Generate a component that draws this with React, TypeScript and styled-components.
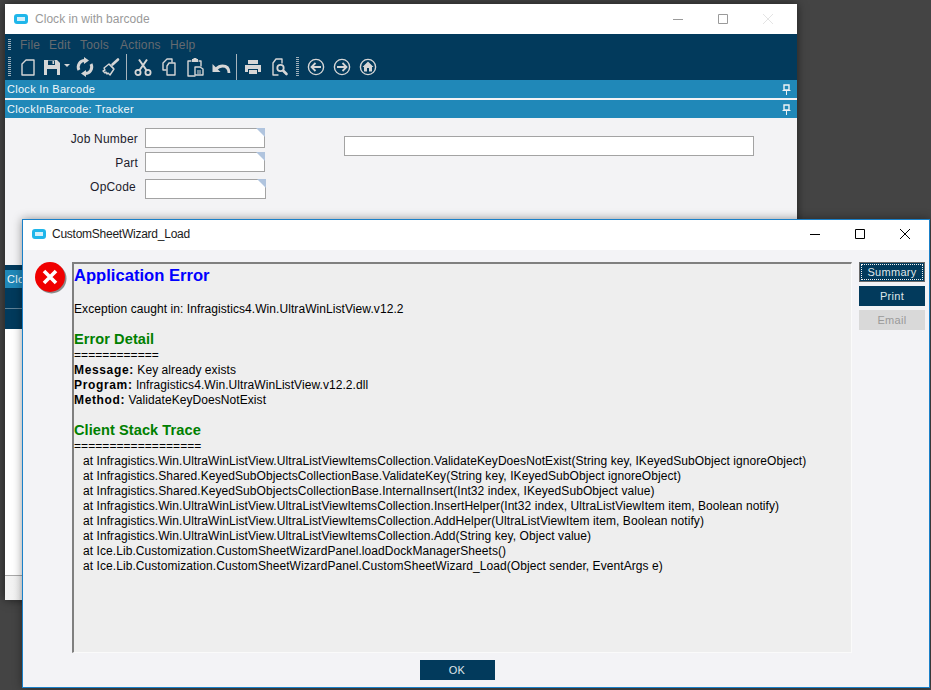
import React from 'react';
import styled, { createGlobalStyle } from 'styled-components';

const GlobalStyle = createGlobalStyle`
  html, body {
    margin: 0;
    padding: 0;
    height: 100%;
    overflow: hidden;
    background: #444444;
    font-family: "Liberation Sans", Arial, sans-serif;
  }
`;

const NAVY = '#023a5c';
const BLUE = '#2088b8';
const ICON = '#d6d6d6';

const Desktop = styled.div`
  position: relative;
  width: 931px;
  height: 690px;
  overflow: hidden;
  background: #444444;
`;

const MainWindow = styled.section`
  position: absolute;
  left: 5px;
  top: 4px;
  width: 792px;
  height: 596px;
  display: flex;
  flex-direction: column;
  background: #f3f3f5;
  box-shadow: 0 0 9px rgba(0, 0, 0, 0.55);
`;

const Dialog = styled.section`
  position: absolute;
  left: 22px;
  top: 219px;
  width: 908px;
  height: 469px;
  box-sizing: border-box;
  display: flex;
  flex-direction: column;
  background: #f3f3f6;
  border: 1px solid #1a80c8;
  box-shadow: 0 0 9px rgba(0, 0, 0, 0.4);
`;

const TitleBar = styled.header<{ $height: number; $lift?: number }>`
  flex: none;
  box-sizing: border-box;
  height: ${p => p.$height}px;
  padding-bottom: ${p => p.$lift ?? 0}px;
  display: flex;
  align-items: center;
  background: #ffffff;
`;

const AppMark = styled.span<{ $left: number }>`
  flex: none;
  box-sizing: border-box;
  width: 14px;
  height: 10px;
  margin: 0 6px 0 ${p => p.$left}px;
  background: #d4f0fb;
  border: 3px solid #1fb6ea;
  border-radius: 3px;
`;

const TitleText = styled.span<{ $active?: boolean }>`
  flex: 1;
  font-size: 12px;
  margin-left: ${p => (p.$active ? 0 : 1)}px;
  letter-spacing: ${p => (p.$active ? '-0.25px' : '0.03px')};
  color: ${p => (p.$active ? '#1a1a1a' : '#9a9a9a')};
`;

const WindowControls = styled.div<{ $right: number }>`
  display: flex;
  gap: 25px;
  margin-right: ${p => p.$right}px;
`;

const ControlGlyph = styled.svg`
  display: block;
  width: 20px;
  height: 12px;
`;

const MenuArea = styled.div`
  flex: none;
  height: 46px;
  background: ${NAVY};
  display: flex;
  flex-direction: column;
`;

const MenuRow = styled.nav`
  height: 20px;
  display: flex;
  align-items: center;
  padding-top: 1px;
  box-sizing: border-box;
`;

const Gripper = styled.span<{ $height: number; $margin: string }>`
  flex: none;
  width: 3px;
  height: ${p => p.$height}px;
  margin: ${p => p.$margin};
  background: repeating-linear-gradient(to bottom, #9fb0bb 0 1px, transparent 1px 2px);
`;

const MenuItem = styled.span<{ $width: number }>`
  width: ${p => p.$width}px;
  font-size: 12px;
  letter-spacing: 0.2px;
  color: #666b70;
`;

const ToolRow = styled.div`
  height: 26px;
  display: flex;
  align-items: center;
`;

const ToolSlot = styled.span<{ $width?: number }>`
  flex: none;
  width: ${p => p.$width ?? 26}px;
  height: 26px;
  display: flex;
  align-items: center;
  justify-content: center;
`;

const ToolGlyph = styled.svg`
  display: block;
  width: 20px;
  height: 20px;
`;

const DropCaret = styled.span`
  flex: none;
  width: 0;
  height: 0;
  margin: 0 3px 4px 2px;
  border-left: 3px solid transparent;
  border-right: 3px solid transparent;
  border-top: 3px solid ${ICON};
`;

const ToolDivider = styled.span<{ $left: number }>`
  flex: none;
  width: 1px;
  height: 26px;
  margin: 0 3px 0 ${p => p.$left}px;
  background: #a8b4bc;
`;

const SheetBar = styled.div<{ $gap?: boolean }>`
  flex: none;
  height: 18px;
  margin-top: ${p => (p.$gap ? 2 : 0)}px;
  display: flex;
  align-items: center;
  justify-content: space-between;
  padding: 0 6px 0 2px;
  background: ${BLUE};
  color: #f2f7fa;
  font-size: 11px;
  letter-spacing: 0.28px;
`;

const PinGlyph = styled.svg`
  display: block;
  width: 9px;
  height: 11px;
`;

const FormArea = styled.div`
  flex: none;
  height: 147px;
  display: flex;
  background: #f3f3f5;
`;

const FieldColumn = styled.div`
  flex: none;
  width: 261px;
  padding-top: 10px;
  display: flex;
  flex-direction: column;
`;

const FieldRow = styled.label<{ $top?: number; $inset?: number; $shift: number }>`
  display: flex;
  align-items: center;
  margin-top: ${p => p.$top ?? 0}px;
  font-size: 12px;
  letter-spacing: 0.2px;
  color: #1c1c2c;
  span {
    width: ${p => 133 - (p.$inset ?? 0)}px;
    margin-right: ${p => 7 + (p.$inset ?? 0)}px;
    text-align: right;
    transform: translateY(${p => p.$shift}px);
  }
`;

const FieldBox = styled.div<{ $width: number }>`
  position: relative;
  box-sizing: border-box;
  width: ${p => p.$width}px;
  height: 20px;
  border: 1px solid #a3a3a3;
  background: #ffffff;
  &::after {
    content: '';
    position: absolute;
    top: -1px;
    right: -1px;
    border-top: 9px solid #b0c4de;
    border-left: 9px solid transparent;
  }
`;

const TextBox = styled.div`
  box-sizing: border-box;
  width: 410px;
  height: 20px;
  margin: 18px 0 0 78px;
  border: 1px solid #a3a3a3;
  background: #ffffff;
`;

const LowerPanel = styled.div`
  flex: 1;
  display: flex;
  flex-direction: column;
  background: #ffffff;
`;

const DarkStrip = styled.div<{ $height: number; $line?: boolean }>`
  flex: none;
  height: ${p => p.$height}px;
  background: ${NAVY};
  border-bottom: ${p => (p.$line ? '1px solid #5f8196' : 'none')};
`;

const ListBlank = styled.div`
  flex: 1;
  background: #ffffff;
`;

const FootBar = styled.div`
  flex: none;
  height: 24px;
  border-top: 1px solid #a9a9a9;
  background: linear-gradient(to right, #f3f3f3, #d9d9d9);
`;

const DialogBody = styled.div`
  flex: 1;
  min-height: 0;
  display: flex;
  padding: 12px 5px 0 11px;
`;

const ErrorIcon = styled.svg`
  flex: none;
  width: 34px;
  height: 34px;
  margin-right: 4px;
`;

const ReportPane = styled.div`
  flex: none;
  width: 780px;
  height: 391px;
  box-sizing: border-box;
  padding: 2px 0 0 0;
  background: #eeeeee;
  border-top: 2px solid #7f7f7f;
  border-left: 2px solid #7f7f7f;
  border-right: 1px solid #fafafa;
  border-bottom: 1px solid #fafafa;
  color: #000000;
  font-size: 12px;
  line-height: 15px;
  letter-spacing: 0.07px;
  white-space: nowrap;
`;

const ReportTitle = styled.h1`
  margin: 0;
  font-size: 16.6px;
  line-height: 20px;
  font-weight: bold;
  letter-spacing: 0;
  color: #0000ff;
`;

const ReportLine = styled.div<{ $top?: number }>`
  margin-top: ${p => p.$top ?? 0}px;
`;

const SectionTitle = styled.h2<{ $top: number }>`
  margin: ${p => p.$top}px 0 0;
  font-size: 14.6px;
  line-height: 18px;
  font-weight: bold;
  letter-spacing: 0.06px;
  color: #008000;
`;

const FieldName = styled.b`
  letter-spacing: 0.65px;
`;

const TraceList = styled.div`
  padding-left: 9px;
`;

const SideButtons = styled.div`
  flex: none;
  margin-left: 7px;
  display: flex;
  flex-direction: column;
  gap: 4px;
`;

const ActionButton = styled.button<{ $focus?: boolean; $width?: number }>`
  box-sizing: border-box;
  width: ${p => p.$width ?? 66}px;
  height: 20px;
  padding: 0;
  border: ${p => (p.$focus ? '1px solid #6b6b6b' : 'none')};
  background: ${NAVY};
  color: #dfe6ea;
  font: 11px "Liberation Sans", Arial, sans-serif;
  letter-spacing: 0.3px;
  outline: ${p => (p.$focus ? '1px dotted #f2f2f2' : 'none')};
  outline-offset: -3px;
  &:disabled {
    background: #d9d9d9;
    color: #9a9a9a;
  }
`;

const DialogFooter = styled.footer`
  flex: none;
  height: 34px;
  box-sizing: border-box;
  display: flex;
  align-items: flex-start;
  justify-content: center;
  padding-top: 7px;
  margin-right: 38px;
`;

const CloseGlyphs = ({ color, dim }: { color: string; dim?: string }) => (
  <>
    <ControlGlyph viewBox="0 0 20 12">
      <path d="M5 6.5h10" stroke={color} strokeWidth="1" />
    </ControlGlyph>
    <ControlGlyph viewBox="0 0 20 12">
      <path d="M5.5 1.5h9v9h-9z" fill="none" stroke={color} strokeWidth="1" />
    </ControlGlyph>
    <ControlGlyph viewBox="0 0 20 12">
      <path d="M5 1l10 10M15 1L5 11" fill="none" stroke={dim ?? color} strokeWidth="1" />
    </ControlGlyph>
  </>
);

const Pin = () => (
  <PinGlyph viewBox="0 0 9 11">
    <path d="M2 1h5v5H2z" fill="none" stroke="#eef2f4" strokeWidth="1.4" />
    <path d="M0.5 6.5h8M4.5 6.5V11" fill="none" stroke="#eef2f4" strokeWidth="1" />
  </PinGlyph>
);

const stroke = { fill: 'none', stroke: ICON, strokeWidth: 1.4, strokeLinejoin: 'round' as const, strokeLinecap: 'round' as const };

const toolIcons: Record<string, React.ReactNode> = {
  new: <path {...stroke} d="M8 3h8v15H4V7z" />,
  save: (
    <>
      <path fill={ICON} d="M2 3h13l3 3v12H2z" />
      <path fill={NAVY} d="M6 3.5h7V8H6zM5 12h10v6H5z" />
      <path fill={ICON} d="M10.5 4h1.6v3h-1.6z" />
    </>
  ),
  refresh: (
    <>
      <path fill="none" stroke={ICON} strokeWidth="3" d="M4 13A6.5 6.5 0 0 1 10 3.5M16 7a6.5 6.5 0 0 1-6 9.5" />
      <path fill={ICON} d="M9 0l5 3.5L9 7zM11 13l-5 3.5 5 3.5z" />
    </>
  ),
  broom: (
    <>
      <path {...stroke} d="M3 11l5-4 5 5-4 6-2-2-1 1-1-2-1 1-2-2 2-1z" />
      <path {...stroke} d="M9 8l3 3" />
      <path stroke={ICON} strokeWidth="2.6" strokeLinecap="round" d="M11.5 7.5L17 2.5" />
    </>
  ),
  cut: (
    <>
      <circle {...stroke} strokeWidth={1.8} cx="5" cy="15.5" r="2.6" />
      <circle {...stroke} strokeWidth={1.8} cx="15" cy="15.5" r="2.6" />
      <path stroke={ICON} strokeWidth="2" d="M6.5 13.2L14 2.5M13.5 13.2L6 2.5" />
    </>
  ),
  copy: (
    <>
      <path {...stroke} d="M7 13H4V6l4-4h5v3" />
      <path {...stroke} fill={NAVY} d="M10 6h6v12H8V9z" />
    </>
  ),
  paste: (
    <>
      <path {...stroke} d="M6 4H3v15h7M14 4h2v5" />
      <path fill={ICON} d="M7 2h1.5V1h3v1H13v3H7z" />
      <path {...stroke} d="M10 10h5l3 2v6h-8z" />
      <path stroke={ICON} d="M12 14h4M12 16h4" />
    </>
  ),
  undo: (
    <>
      <path fill="none" stroke={ICON} strokeWidth="2.8" d="M18 16c0-5-3-7-6.5-7S7 10 5 12" />
      <path fill={ICON} d="M1.5 7v8h8z" />
    </>
  ),
  print: (
    <>
      <path fill={ICON} d="M5 3h10v4H5zM2 8h16v7h-3v-3H5v3H2z" />
      <path fill={ICON} d="M6 13h8v4H6z" />
    </>
  ),
  preview: (
    <>
      <path {...stroke} d="M13 6V2H7L4 6v12h5" />
      <circle {...stroke} strokeWidth={1.8} cx="11.5" cy="11" r="3.2" />
      <path stroke={ICON} strokeWidth="2.6" strokeLinecap="round" d="M14.5 14l3 3" />
    </>
  ),
  back: (
    <>
      <circle {...stroke} cx="10" cy="10" r="7.6" />
      <path fill="none" stroke={ICON} strokeWidth="1.8" d="M15 10H6M9.5 6L5.5 10l4 4" />
    </>
  ),
  forward: (
    <>
      <circle {...stroke} cx="10" cy="10" r="7.6" />
      <path fill="none" stroke={ICON} strokeWidth="1.8" d="M5 10h9M10.5 6l4 4-4 4" />
    </>
  ),
  home: (
    <>
      <circle {...stroke} cx="10" cy="10" r="7.6" />
      <path fill={ICON} d="M10 4.5l5.5 5.5H14v4.5h-3V11H9v3.5H6V10H4.5z" />
    </>
  ),
};

const Tool = ({ name, width }: { name: string; width?: number }) => (
  <ToolSlot $width={width}>
    <ToolGlyph viewBox="0 0 20 20">{toolIcons[name]}</ToolGlyph>
  </ToolSlot>
);

const traceLines = [
  'at Infragistics.Win.UltraWinListView.UltraListViewItemsCollection.ValidateKeyDoesNotExist(String key, IKeyedSubObject ignoreObject)',
  'at Infragistics.Shared.KeyedSubObjectsCollectionBase.ValidateKey(String key, IKeyedSubObject ignoreObject)',
  'at Infragistics.Shared.KeyedSubObjectsCollectionBase.InternalInsert(Int32 index, IKeyedSubObject value)',
  'at Infragistics.Win.UltraWinListView.UltraListViewItemsCollection.InsertHelper(Int32 index, UltraListViewItem item, Boolean notify)',
  'at Infragistics.Win.UltraWinListView.UltraListViewItemsCollection.AddHelper(UltraListViewItem item, Boolean notify)',
  'at Infragistics.Win.UltraWinListView.UltraListViewItemsCollection.Add(String key, Object value)',
  'at Ice.Lib.Customization.CustomSheetWizardPanel.loadDockManagerSheets()',
  'at Ice.Lib.Customization.CustomSheetWizardPanel.CustomSheetWizard_Load(Object sender, EventArgs e)',
];

const App: React.FC = () => (
  <Desktop>
    <GlobalStyle />
    <MainWindow>
      <TitleBar $height={30}>
        <AppMark $left={9} />
        <TitleText>Clock in with barcode</TitleText>
        <WindowControls $right={19}>
          <CloseGlyphs color="#9a9a9a" dim="#e4e4e4" />
        </WindowControls>
      </TitleBar>
      <MenuArea>
        <MenuRow>
          <Gripper $height={12} $margin="0 9px 0 3px" />
          <MenuItem $width={29}>File</MenuItem>
          <MenuItem $width={31}>Edit</MenuItem>
          <MenuItem $width={40}>Tools</MenuItem>
          <MenuItem $width={50}>Actions</MenuItem>
          <MenuItem $width={40}>Help</MenuItem>
        </MenuRow>
        <ToolRow>
          <Gripper $height={20} $margin="0 4px 0 3px" />
          <Tool name="new" />
          <Tool name="save" width={21} />
          <DropCaret />
          <Tool name="refresh" width={24} />
          <Tool name="broom" width={28} />
          <ToolDivider $left={1} />
          <Tool name="cut" />
          <Tool name="copy" />
          <Tool name="paste" />
          <Tool name="undo" />
          <ToolDivider $left={2} />
          <Tool name="print" />
          <Tool name="preview" />
          <Gripper $height={20} $margin="0 4px 0 4px" />
          <Tool name="back" />
          <Tool name="forward" />
          <Tool name="home" />
        </ToolRow>
      </MenuArea>
      <SheetBar>
        <span>Clock In Barcode</span>
        <Pin />
      </SheetBar>
      <SheetBar $gap>
        <span>ClockInBarcode: Tracker</span>
        <Pin />
      </SheetBar>
      <FormArea>
        <FieldColumn>
          <FieldRow $shift={1}>
            <span>Job Number</span>
            <FieldBox $width={120} />
          </FieldRow>
          <FieldRow $top={4} $shift={1}>
            <span>Part</span>
            <FieldBox $width={120} />
          </FieldRow>
          <FieldRow $top={7} $inset={2} $shift={-2}>
            <span>OpCode</span>
            <FieldBox $width={121} />
          </FieldRow>
        </FieldColumn>
        <TextBox />
      </FormArea>
      <LowerPanel>
        <DarkStrip $height={5} />
        <SheetBar>
          <span>Clock</span>
        </SheetBar>
        <DarkStrip $height={20} $line />
        <DarkStrip $height={20} />
        <ListBlank />
        <FootBar />
      </LowerPanel>
    </MainWindow>

    <Dialog>
      <TitleBar $height={30} $lift={2}>
        <AppMark $left={9} />
        <TitleText $active>CustomSheetWizard_Load</TitleText>
        <WindowControls $right={14}>
          <CloseGlyphs color="#000000" />
        </WindowControls>
      </TitleBar>
      <DialogBody>
        <ErrorIcon viewBox="0 0 34 34">
          <circle cx="17.5" cy="16.5" r="15" fill="#8a8a8a" />
          <circle cx="16" cy="15" r="15" fill="#f00000" />
          <path d="M10 9l12 12M22 9L10 21" stroke="#ffffff" strokeWidth="3.6" />
        </ErrorIcon>
        <ReportPane>
          <ReportTitle>Application Error</ReportTitle>
          <ReportLine $top={16}>Exception caught in: Infragistics4.Win.UltraWinListView.v12.2</ReportLine>
          <SectionTitle $top={13}>Error Detail</SectionTitle>
          <ReportLine>============</ReportLine>
          <ReportLine><FieldName>Message:</FieldName> Key already exists</ReportLine>
          <ReportLine><FieldName>Program:</FieldName> Infragistics4.Win.UltraWinListView.v12.2.dll</ReportLine>
          <ReportLine><FieldName>Method:</FieldName> ValidateKeyDoesNotExist</ReportLine>
          <SectionTitle $top={13}>Client Stack Trace</SectionTitle>
          <ReportLine>==================</ReportLine>
          <TraceList>
            {traceLines.map(line => (
              <div key={line}>{line}</div>
            ))}
          </TraceList>
        </ReportPane>
        <SideButtons>
          <ActionButton $focus>Summary</ActionButton>
          <ActionButton>Print</ActionButton>
          <ActionButton disabled>Email</ActionButton>
        </SideButtons>
      </DialogBody>
      <DialogFooter>
        <ActionButton $width={75}>OK</ActionButton>
      </DialogFooter>
    </Dialog>
  </Desktop>
);

export default App;
